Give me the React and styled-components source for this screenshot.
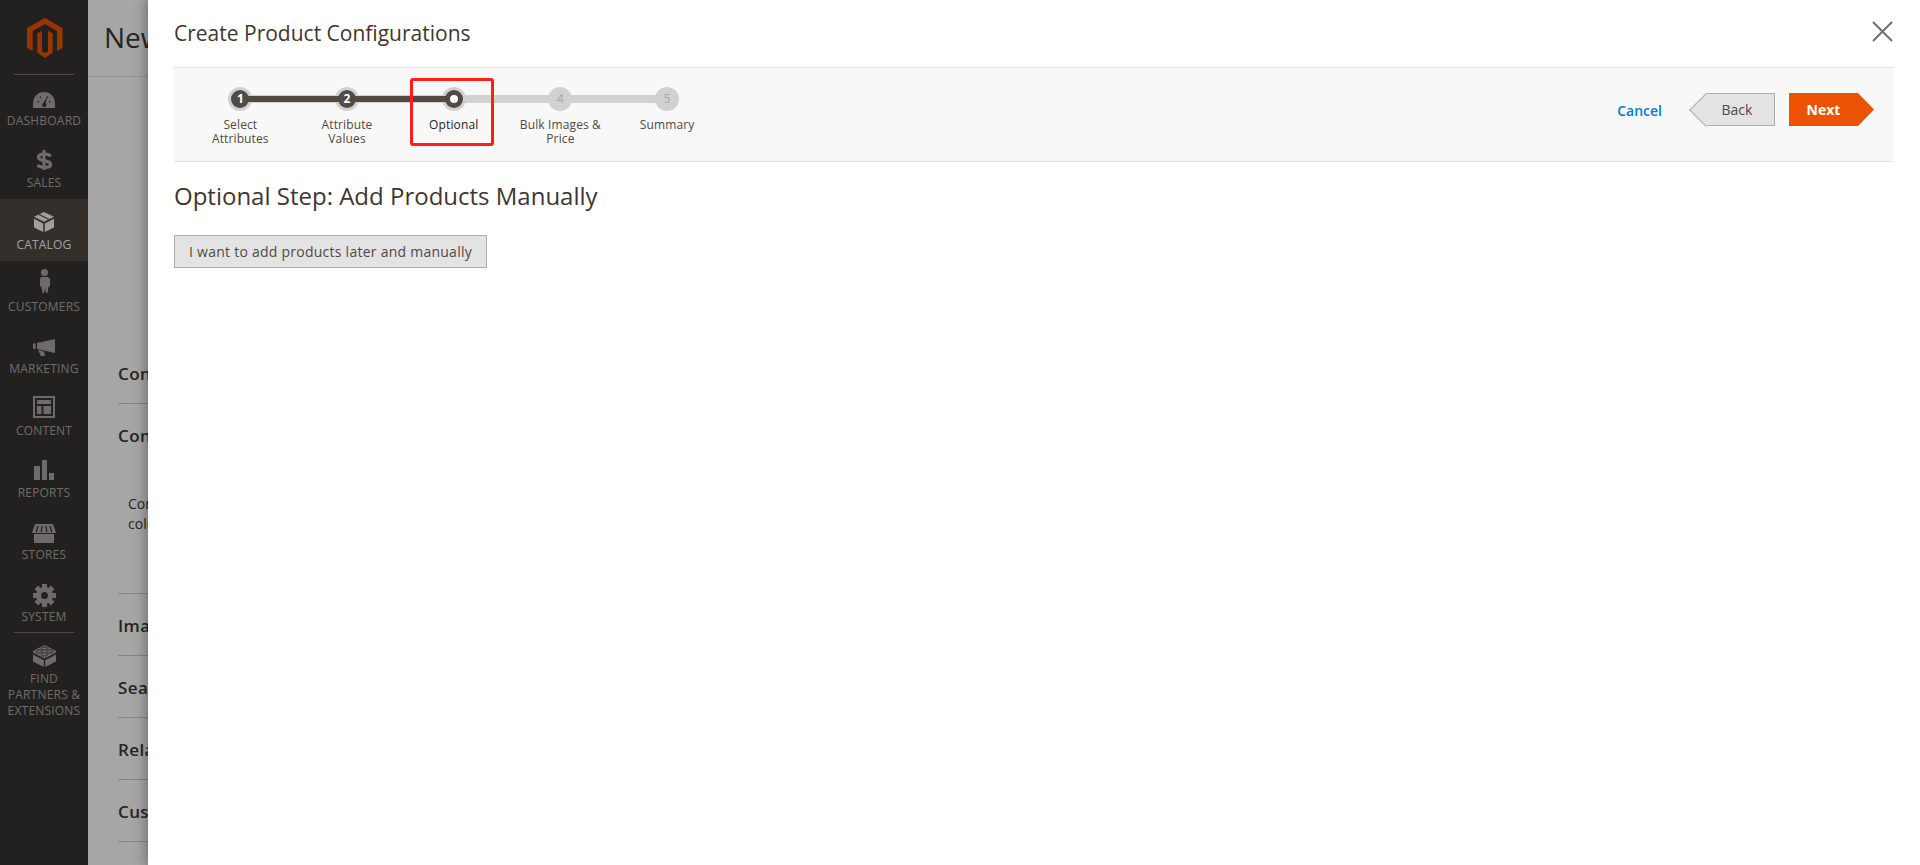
import React from 'react';
import styled, { createGlobalStyle } from 'styled-components';

const Global = createGlobalStyle`
  html, body { margin: 0; padding: 0; height: 100%; overflow: hidden; background: #fff; }
  body { font-family: "Open Sans", "Liberation Sans", sans-serif; color: #41362f; }
  * { box-sizing: border-box; }
`;

const Page = styled.div`
  position: relative;
  display: flex;
  width: 100%;
  height: 865px;
  overflow: hidden;
`;

const Sidebar = styled.nav`
  flex: 0 0 88px;
  display: flex;
  flex-direction: column;
  background: #373330;
`;

const LogoBlock = styled.div`
  height: 75px;
  display: flex;
  align-items: center;
  justify-content: center;
  padding-left: 1px;
`;

const Divider = styled.div`
  height: 1px;
  margin: -1px 14px 0;
  background: #736e69;
`;

const NavItem = styled.a`
  height: ${p => p.$tall ? 'auto' : '62px'};
  display: flex;
  flex-direction: column;
  align-items: center;
  padding-top: 7px;
  background: ${p => p.$active ? '#514943' : 'transparent'};
  color: ${p => p.$active ? '#f7f3eb' : '#aaa6a0'};
`;

const NavIcon = styled.svg`
  width: 32px;
  height: 32px;
  flex: none;
  fill: currentColor;
`;

const NavLabel = styled.span`
  margin-top: -1px;
  font-size: 12px;
  line-height: 16px;
  letter-spacing: .2px;
  text-align: center;
  text-transform: uppercase;
  white-space: nowrap;
`;

const Main = styled.main`
  flex: 1;
  min-width: 0;
  display: flex;
  flex-direction: column;
`;

const PageHeader = styled.header`
  height: 77px;
  padding: 18px 16px 0;
  border-bottom: 1px solid #e3e3e3;
  margin-bottom: 265px;
`;

const PageTitle = styled.h1`
  margin: 0;
  font-size: 28px;
  line-height: 38px;
  font-weight: 400;
  color: #41362f;
`;

const Sections = styled.div`
  margin-left: 30px;
  display: flex;
  flex-direction: column;
`;

const Section = styled.section`
  height: ${p => p.$open ? '190px' : '62px'};
  padding-top: 20px;
  border-bottom: 1px solid #cccccc;
`;

const SectionTitle = styled.strong`
  display: block;
  font-size: 17px;
  line-height: 23px;
  font-weight: 600;
  letter-spacing: .4px;
  color: #41362f;
  white-space: nowrap;
`;

const SectionNote = styled.p`
  margin: 47px 0 0 10px;
  font-size: 14px;
  line-height: 20px;
  color: #41362f;
  white-space: nowrap;
`;

const Overlay = styled.div`
  position: absolute;
  inset: 0;
  background: rgba(0, 0, 0, .35);
`;

const Modal = styled.aside`
  position: absolute;
  top: 0;
  right: 0;
  bottom: 0;
  left: 148px;
  background: #fff;
  box-shadow: 0 0 12px 2px rgba(0, 0, 0, .35);
  padding: 0 26px;
`;

const ModalHeader = styled.div`
  height: 67px;
  display: flex;
  align-items: flex-start;
  justify-content: space-between;
`;

const ModalTitle = styled.h2`
  margin: 19px 0 0;
  font-size: 21px;
  line-height: 29px;
  font-weight: 400;
  color: #41362f;
`;

const CloseIcon = styled.svg`
  display: block;
  width: 21px;
  height: 21px;
  margin: 21px 1px 0 0;
  stroke: #736e69;
  stroke-width: 2;
  fill: none;
`;

const Toolbar = styled.div`
  height: 95px;
  display: flex;
  justify-content: space-between;
  background: #f8f8f8;
  border-top: 1px solid #e3e3e3;
  border-bottom: 1px solid #e3e3e3;
`;

const Steps = styled.ol`
  list-style: none;
  margin: 0;
  padding: 19px 0 0 13px;
  display: flex;
  align-items: flex-start;
`;

const Step = styled.li`
  position: relative;
  width: 106.7px;
  display: flex;
  flex-direction: column;
  align-items: center;

  &::before {
    content: ${p => p.$last ? 'none' : '""'};
    position: absolute;
    z-index: 1;
    top: 8px;
    left: 50%;
    width: 100%;
    height: 8px;
    background: #d1d1d1;
  }
  &::after {
    content: ${p => p.$done ? '""' : 'none'};
    position: absolute;
    z-index: 1;
    top: 9px;
    left: 50%;
    width: 100%;
    height: 6px;
    background: #514943;
  }
`;

const Dot = styled.span`
  position: relative;
  width: 24px;
  height: 24px;
  border-radius: 50%;
  background: #d1d1d1;
  display: flex;
  align-items: center;
  justify-content: center;
  font-size: 12px;
  line-height: 1;
  font-weight: ${p => p.$state === 'todo' ? 400 : 700};
  color: ${p => p.$state === 'todo' ? '#a6a6a6' : '#fff'};

  &::before {
    content: ${p => p.$state === 'todo' ? 'none' : '""'};
    position: absolute;
    z-index: 2;
    inset: 3px;
    border-radius: 50%;
    background: #514943;
  }
`;

const DotNumber = styled.span`
  position: relative;
  z-index: 3;
`;

const ActiveCore = styled.span`
  position: relative;
  z-index: 3;
  width: 8px;
  height: 8px;
  border-radius: 50%;
  background: #fff;
`;

const StepLabel = styled.span`
  margin-top: 7px;
  font-size: 12px;
  line-height: 14px;
  letter-spacing: .12px;
  text-align: center;
  color: ${p => p.$active ? '#1f1f1f' : '#514943'};
  font-weight: ${p => p.$active ? 500 : 400};
`;

const Highlight = styled.span`
  position: absolute;
  top: -9px;
  left: 9.5px;
  z-index: 4;
  width: 84px;
  height: 68px;
  border: 3px solid #ff1f14;
  border-radius: 3px;
`;

const Actions = styled.div`
  display: flex;
  align-items: flex-start;
  padding: 25px 20px 0 0;
`;

const CancelLink = styled.a`
  margin: 8px 27px 0 0;
  font-size: 14px;
  line-height: 19px;
  font-weight: 600;
  color: #007bdb;
`;

const BackButton = styled.button`
  position: relative;
  width: 69px;
  height: 33px;
  margin: 0 14px 0 17px;
  padding: 0 6px 0 0;
  background: #e3e3e3;
  border: 1px solid #adadad;
  border-left: 0;
  font: 500 14px/19px "Open Sans", sans-serif;
  color: #514943;

  &::before {
    content: "";
    position: absolute;
    top: 4px;
    left: -12px;
    width: 23px;
    height: 23px;
    background: #e3e3e3;
    border-left: 1px solid #adadad;
    border-bottom: 1px solid #adadad;
    transform: rotate(45deg);
  }
`;

const BackText = styled.span`
  position: relative;
`;

const NextButton = styled.button`
  width: 85px;
  height: 33px;
  padding: 0 16px 0 0;
  border: 0;
  background: #eb5202;
  clip-path: polygon(0 0, 69px 0, 100% 50%, 69px 100%, 0 100%);
  font: 700 14px/19px "Open Sans", sans-serif;
  color: #fff;
`;

const Heading = styled.h3`
  margin: 17px 0 23px;
  font-size: 24px;
  line-height: 33px;
  font-weight: 400;
  color: #41362f;
`;

const LaterButton = styled.button`
  display: block;
  width: 313px;
  height: 33px;
  padding: 0;
  background: #e3e3e3;
  border: 1px solid #adadad;
  font: 500 14px/19px "Open Sans", sans-serif;
  letter-spacing: .25px;
  color: #514943;
`;

const Cut = ({ d }) => <path d={d} fill="none" stroke="#373330" strokeWidth="1.2" />;

const icons = {
  dashboard: (
    <>
      <path d="M5 26v-4C5 14.500 10 10 16 10s11 4.500 11 12v4z" />
      <Cut d="M9.500 19l1.500 1M12 14.500l1 1.500M20 14.500l-1 1.500M22.500 19l-1.500 1" />
      <path d="M19.500 14.500l-2 6.500a2.200 2.200 0 1 1-3.500 2z" fill="#373330" />
    </>
  ),
  sales: (
    <>
      <path d="M22.500 12.500C21 9.500 11 9 10.500 13c-.5 5 12 2.500 12 7.500 0 4-10.500 3.500-13 .5" fill="none" stroke="currentColor" strokeWidth="3.400" />
      <path d="M16 6v20" fill="none" stroke="currentColor" strokeWidth="3" />
    </>
  ),
  catalog: (
    <>
      <path d="M16 6l10 4.800-10 5-10-5z" />
      <path d="M6 12.800l9.200 4.700V26L6 21.500zM26 12.800l-9.200 4.700V26l9.200-4.500z" />
      <path d="M11 8.500l10 5" fill="none" stroke="#514943" strokeWidth="1.200" />
    </>
  ),
  customers: (
    <>
      <circle cx="16.500" cy="4.500" r="3.500" />
      <path d="M13 9h7l2 2v7l-1.500 1-1 6h-1.500l-1-5-1 5h-1.500l-1-6-1.500-1v-7z" />
    </>
  ),
  marketing: (
    <>
      <path d="M5 13.500h2.500V19H5z" />
      <path d="M9 13l18-4v14l-18-4z" />
      <path d="M10 20l6 1.500 1 4.500h-4z" />
    </>
  ),
  content: (
    <>
      <path fillRule="evenodd" d="M5 4h22v22H5zM7 6v18h18V6z" />
      <path d="M9 8h14v4H9zM9 14h4.500v8H9zM15.500 14H23v8h-7.500z" />
    </>
  ),
  reports: (
    <path d="M6 12h6v14H6zM14 6h5v20h-5zM21 19h5v7h-5z" />
  ),
  stores: (
    <>
      <path d="M7 8h18l3 9H4z" />
      <Cut d="M10 10l-1.800 6M14 10l-.8 6M18 10l.8 6M22 10l1.800 6" />
      <path d="M6 18h20v9H6z" />
    </>
  ),
  system: (
    <>
      <circle cx="16.500" cy="17.500" r="6" fill="none" stroke="currentColor" strokeWidth="5" />
      {[0, 45, 90, 135, 180, 225, 270, 315].map(a => (
        <path key={a} d="M14 6h5v4h-5z" transform={`rotate(${a} 16.500 17.500)`} />
      ))}
    </>
  ),
  find: (
    <>
      <path d="M16.500 5L28 11v1.500L16.500 18.500 5 12.500V11z" />
      <path d="M5 14.500l10.800 5.700V27L5 21.500zM28 14.500l-10.800 5.700V27L28 21.500z" />
      <ellipse cx="16.500" cy="8.500" rx="3.200" ry="1.600" fill="none" stroke="#373330" strokeWidth=".9" />
      <ellipse cx="11" cy="11.500" rx="3.200" ry="1.600" fill="none" stroke="#373330" strokeWidth=".9" />
      <ellipse cx="22" cy="11.500" rx="3.200" ry="1.600" fill="none" stroke="#373330" strokeWidth=".9" />
      <ellipse cx="16.500" cy="14.500" rx="3.200" ry="1.600" fill="none" stroke="#373330" strokeWidth=".9" />
    </>
  ),
};

const navItems = [
  { key: 'dashboard', label: 'Dashboard' },
  { key: 'sales', label: 'Sales' },
  { key: 'catalog', label: 'Catalog', active: true },
  { key: 'customers', label: 'Customers' },
  { key: 'marketing', label: 'Marketing' },
  { key: 'content', label: 'Content' },
  { key: 'reports', label: 'Reports' },
  { key: 'stores', label: 'Stores' },
  { key: 'system', label: 'System' },
];

const steps = [
  { n: 1, lines: ['Select', 'Attributes'], state: 'done' },
  { n: 2, lines: ['Attribute', 'Values'], state: 'done' },
  { n: 3, lines: ['Optional'], state: 'active' },
  { n: 4, lines: ['Bulk Images &', 'Price'], state: 'todo' },
  { n: 5, lines: ['Summary'], state: 'todo' },
];

const Logo = () => (
  <svg width="36" height="40" viewBox="0 0 36 40" fill="#eb5202">
    <path d="M18 0l17.500 10v20L30 33V13L18 6 5.700 13v20L0 30V10z" />
    <path d="M10.300 15.400L15 12.700v20.800l3 1.500 3-1.500V12.700l4.700 2.700v19.100L18 40l-7.700-5.500z" />
  </svg>
);

export default function App() {
  return (
    <Page>
      <Global />
      <Sidebar>
        <LogoBlock><Logo /></LogoBlock>
        <Divider />
        {navItems.map(item => (
          <NavItem key={item.key} $active={item.active}>
            <NavIcon viewBox="0 0 32 32">{icons[item.key]}</NavIcon>
            <NavLabel>{item.label}</NavLabel>
          </NavItem>
        ))}
        <Divider />
        <NavItem $tall>
          <NavIcon viewBox="0 0 32 32">{icons.find}</NavIcon>
          <NavLabel>Find<br />Partners &amp;<br />Extensions</NavLabel>
        </NavItem>
      </Sidebar>
      <Main>
        <PageHeader><PageTitle>New</PageTitle></PageHeader>
        <Sections>
          <Section><SectionTitle>Content</SectionTitle></Section>
          <Section $open>
            <SectionTitle>Configurations</SectionTitle>
            <SectionNote>Configurable<br />color</SectionNote>
          </Section>
          <Section><SectionTitle>Images</SectionTitle></Section>
          <Section><SectionTitle>Search</SectionTitle></Section>
          <Section><SectionTitle>Related</SectionTitle></Section>
          <Section><SectionTitle>Customizable</SectionTitle></Section>
        </Sections>
      </Main>
      <Overlay />
      <Modal>
        <ModalHeader>
          <ModalTitle>Create Product Configurations</ModalTitle>
          <CloseIcon viewBox="0 0 21 21"><path d="M1 1l19 19M20 1L1 20" /></CloseIcon>
        </ModalHeader>
        <Toolbar>
          <Steps>
            {steps.map((s, i) => (
              <Step key={s.n} $done={i < 2} $last={i === steps.length - 1}>
                <Dot $state={s.state}>
                  {s.state === 'active' ? <ActiveCore /> : <DotNumber>{s.n}</DotNumber>}
                </Dot>
                <StepLabel $active={s.state === 'active'}>
                  {s.lines.map((l, j) => <React.Fragment key={l}>{j > 0 && <br />}{l}</React.Fragment>)}
                </StepLabel>
                {s.state === 'active' && <Highlight />}
              </Step>
            ))}
          </Steps>
          <Actions>
            <CancelLink>Cancel</CancelLink>
            <BackButton><BackText>Back</BackText></BackButton>
            <NextButton>Next</NextButton>
          </Actions>
        </Toolbar>
        <Heading>Optional Step: Add Products Manually</Heading>
        <LaterButton>I want to add products later and manually</LaterButton>
      </Modal>
    </Page>
  );
}
